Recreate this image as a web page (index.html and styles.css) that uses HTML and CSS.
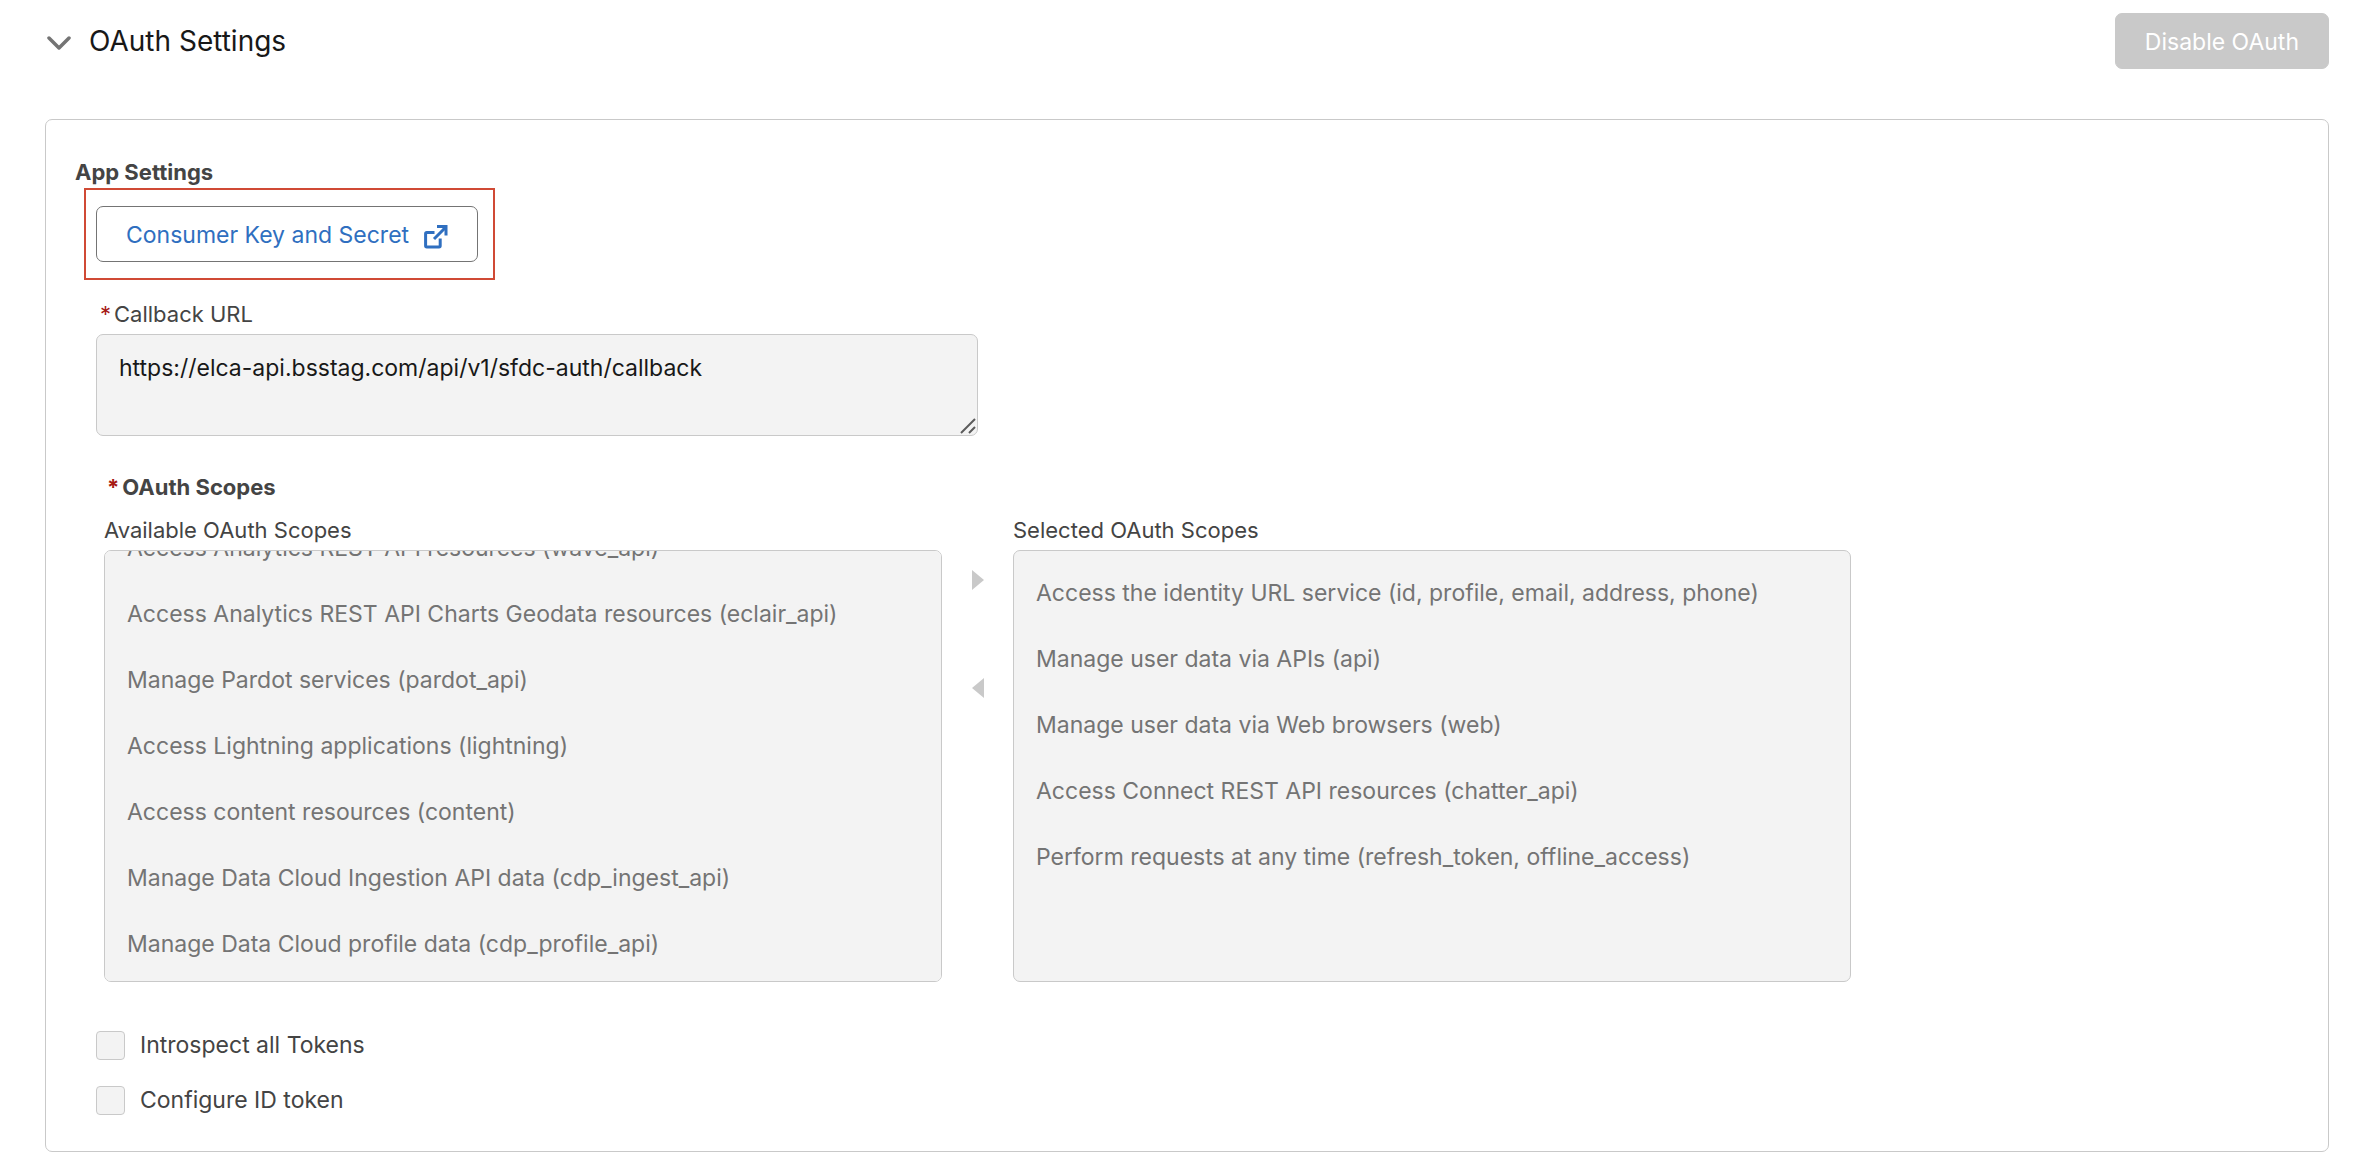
FILE: index.html
```html
<!DOCTYPE html>
<html lang="en"><head>
<meta charset="utf-8">
<title>OAuth Settings</title>
<meta name="viewport" content="width=device-width, initial-scale=1">
<link rel="stylesheet" href="styles.css">
</head><body>
<header class="section-header">
<h1><button type="button" class="toggle" aria-expanded="true">
<svg class="chevron" viewBox="0 0 24 16" aria-hidden="true"><path d="M2 3 12 13 22 3"/></svg>
<span>OAuth Settings</span>
</button></h1>
<button type="button" class="btn btn-disabled" disabled>Disable OAuth</button>
</header>
<main class="panel">
<h2>App Settings</h2>
<div class="highlight">
<button type="button" class="btn btn-outline">
<span>Consumer Key and Secret</span>
<svg class="icon-out" viewBox="0 0 24 24" aria-hidden="true"><path class="box" d="M10.5 7.5H2.8Q1.6 7.5 1.6 8.7V20.7Q1.6 21.9 2.8 21.9H15Q16.2 21.9 16.2 20.7V13.5"/><path class="arrow" d="M10 14 21 3"/><path class="head" d="M13 0H23.5V10.5H20.5V5.2L18.3 3H13Z"/></svg>
</button>
</div>
<div class="field">
<label for="callback"><span class="required">*</span>Callback URL</label>
<div class="textarea-wrap">
<textarea id="callback" readonly>https://elca-api.bsstag.com/api/v1/sfdc-auth/callback</textarea>
<svg class="grip" viewBox="0 0 16 16" aria-hidden="true"><path d="M1 15 15 1M9 15 15 9"/></svg>
</div>
</div>
<section class="scopes">
<h2><span class="required">*</span>OAuth Scopes</h2>
<div class="dueling">
<div class="list-col">
<span class="list-label" id="available-label">Available OAuth Scopes</span>
<ul class="listbox" id="available" role="listbox" aria-labelledby="available-label" aria-disabled="true">
<li role="option">Access Analytics REST API resources (wave_api)</li>
<li role="option">Access Analytics REST API Charts Geodata resources (eclair_api)</li>
<li role="option">Manage Pardot services (pardot_api)</li>
<li role="option">Access Lightning applications (lightning)</li>
<li role="option">Access content resources (content)</li>
<li role="option">Manage Data Cloud Ingestion API data (cdp_ingest_api)</li>
<li role="option">Manage Data Cloud profile data (cdp_profile_api)</li>
</ul>
</div>
<div class="move">
<button type="button" aria-label="Add" disabled><svg viewBox="0 0 12 20"><path d="M0 0 12 10 0 20Z"/></svg></button>
<button type="button" aria-label="Remove" disabled><svg viewBox="0 0 12 20"><path d="M12 0 0 10 12 20Z"/></svg></button>
</div>
<div class="list-col">
<span class="list-label" id="selected-label">Selected OAuth Scopes</span>
<ul class="listbox" role="listbox" aria-labelledby="selected-label" aria-disabled="true">
<li role="option">Access the identity URL service (id, profile, email, address, phone)</li>
<li role="option">Manage user data via APIs (api)</li>
<li role="option">Manage user data via Web browsers (web)</li>
<li role="option">Access Connect REST API resources (chatter_api)</li>
<li role="option">Perform requests at any time (refresh_token, offline_access)</li>
</ul>
</div>
</div>
</section>
<div class="checks">
<label><input type="checkbox" disabled>Introspect all Tokens</label>
<label><input type="checkbox" disabled>Configure ID token</label>
</div>
</main>
<script>
document.getElementById('available').scrollTop = 45;
</script>
</body></html>
```

FILE: styles.css
```css
* { box-sizing: border-box; }
body { font-family: Inter, "Liberation Sans", sans-serif; font-size: 23px; line-height: 32px; margin: 0; padding: 13px 41px 8px 45px; color: #444; background: #fff; }
h1, h2, ul { margin: 0; padding: 0; }
h2 { font-size: 22px; font-weight: 700; }
button, textarea { font-family: inherit; font-size: inherit; line-height: inherit; }

.section-header { display: flex; justify-content: space-between; align-items: center; margin-bottom: 50px; }
.section-header h1 { font-size: 28px; font-weight: 400; }
.toggle { display: flex; align-items: center; gap: 18px; padding: 0 0 0 2px; border: none; background: none; color: #181818; cursor: pointer; }
.chevron { width: 24px; height: 16px; margin-top: 3px; fill: none; stroke: #747474; stroke-width: 3.5; stroke-linecap: round; stroke-linejoin: round; }
.btn { display: flex; align-items: center; height: 56px; padding: 1px 29px 0; border: 1px solid #747474; border-radius: 7px; background: #fff; white-space: nowrap; }
.btn-disabled { background: #c9c9c9; border-color: #c9c9c9; color: #fff; }
.btn-outline { gap: 15px; color: #2f6fc0; cursor: pointer; }
.icon-out { width: 24px; height: 24px; margin-top: 5px; fill: #2f6fc0; }
.icon-out .box, .icon-out .arrow { fill: none; stroke: #2f6fc0; stroke-width: 3; }

.panel { border: 1px solid #c9c9c9; border-radius: 7px; padding: 36px 29px; }
.highlight { width: fit-content; margin-left: 9px; padding: 16px 15px 16px 10px; border: 2px solid #d04a35; }
.required { color: #a61a14; margin-right: 3px; }

.field { margin: 18px 0 0 21px; font-size: 22px; }
.field label { display: block; margin-bottom: 4px; padding-left: 4px; }
.textarea-wrap { position: relative; max-width: 882px; }
textarea { display: block; width: 100%; height: 102px; padding: 17px 22px; border: 1px solid #c9c9c9; border-radius: 7px; background: #f3f3f3; color: #181818; font-size: 23px; resize: none; outline: none; }
.grip { position: absolute; right: 2px; bottom: 2px; width: 16px; height: 16px; fill: none; stroke: #5c5c5c; stroke-width: 2; }

.scopes { margin: 35px 0 0 29px; }
.scopes h2 { margin-bottom: 11px; padding-left: 3px; }
.dueling { display: flex; max-width: 1747px; }
.list-col { flex: 1; min-width: 0; }
.list-label { display: block; margin-bottom: 4px; font-size: 22px; }
.listbox { height: 432px; padding: 9px 0; border: 1px solid #c9c9c9; border-radius: 7px; background: #f3f3f3; color: #747474; list-style: none; overflow-y: auto; scrollbar-width: none; }
.listbox li { padding: 17px 22px; white-space: nowrap; }
.move { display: flex; flex-direction: column; align-items: center; gap: 88px; width: 71px; padding-top: 56px; }
.move button { display: flex; padding: 0; border: none; background: none; }
.move svg { width: 12px; height: 20px; fill: #c9c9c9; }

.checks { display: flex; flex-direction: column; align-items: flex-start; gap: 26px; margin: 49px 0 0 21px; line-height: 29px; }
.checks label { display: flex; align-items: center; gap: 15px; }
.checks input { appearance: none; width: 29px; height: 29px; margin: 0; border: 1px solid #c9c9c9; border-radius: 4px; background: #f3f3f3; }
```
